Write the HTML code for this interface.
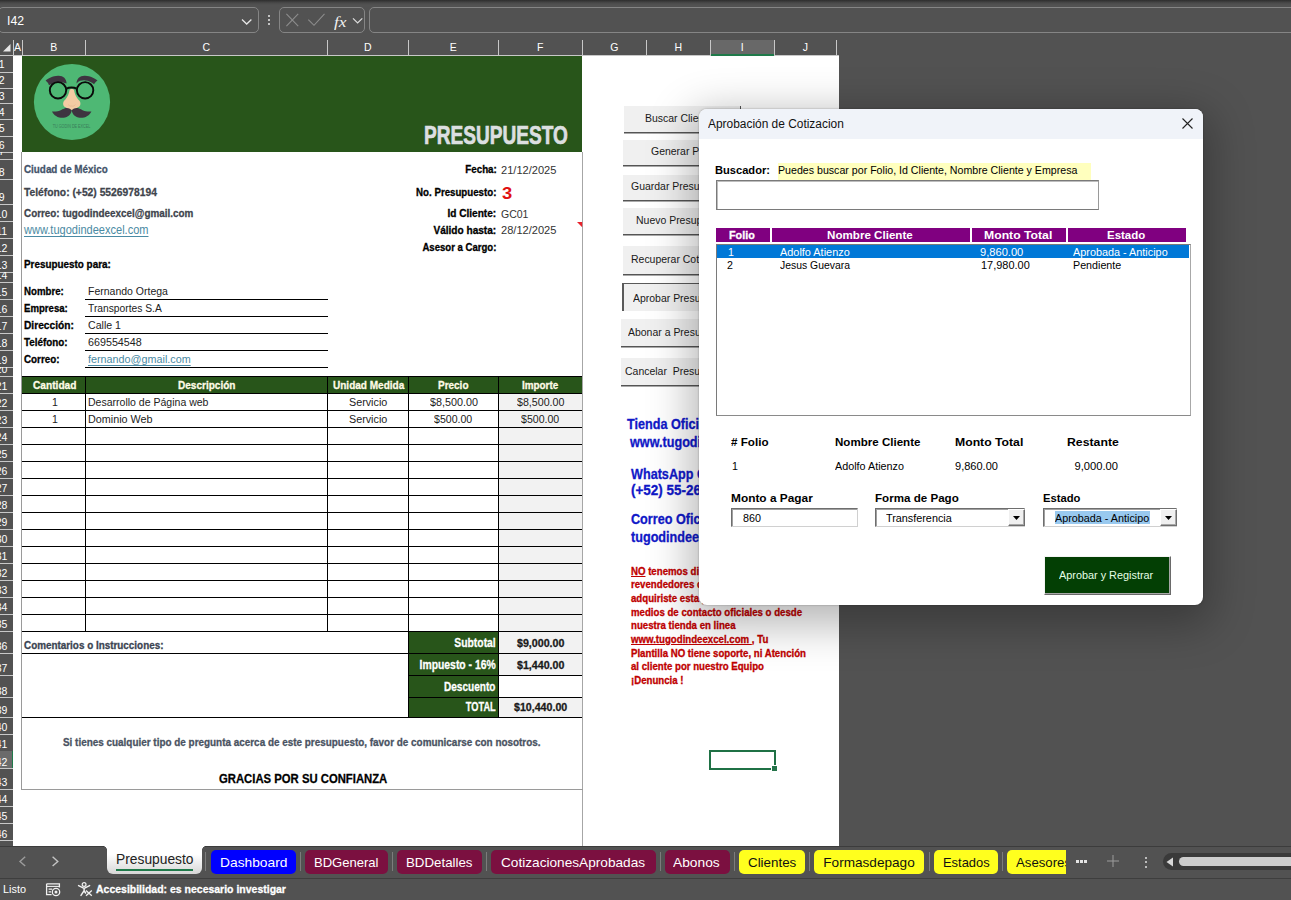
<!DOCTYPE html>
<html lang="es"><head><meta charset="utf-8"><title>Presupuesto - Aprobación de Cotizacion</title>
<style>
html,body{margin:0;padding:0}
body{width:1291px;height:900px;overflow:hidden;position:relative;background:#525252;font-family:"Liberation Sans",sans-serif;}
.t{position:absolute;white-space:pre;display:block}
.r{position:absolute}
svg{position:absolute;overflow:visible}
</style></head><body>
<div class="r" style="left:0.00px;top:0.00px;width:1291.00px;height:5.00px;background:linear-gradient(#2e2e2e,#4a4a4a 60%,#525252);"></div>
<div class="r" style="left:-2px;top:7px;width:258.5px;height:23.5px;border:1px solid #858585;border-radius:5px"></div>
<span class="t" style="top:14.00px;font-size:13.5px;line-height:13.5px;color:#fff;left:6.50px;transform-origin:0 50%;transform:scaleX(0.9058);">I42</span>
<svg style="left:241.3px;top:16.6px" width="12" height="10"><path d="M1 2.5 L5.7 7 L10.4 2.5" fill="none" stroke="#e6e6e6" stroke-width="1.3"/></svg>
<div class="r" style="left:267.80px;top:15.00px;width:2.40px;height:2.40px;background:#e8e8e8;border-radius:1px"></div>
<div class="r" style="left:267.80px;top:19.00px;width:2.40px;height:2.40px;background:#e8e8e8;border-radius:1px"></div>
<div class="r" style="left:267.80px;top:23.00px;width:2.40px;height:2.40px;background:#e8e8e8;border-radius:1px"></div>
<div class="r" style="left:279px;top:7px;width:83.5px;height:23.5px;border:1px solid #858585;border-radius:5px"></div>
<svg style="left:286px;top:13px" width="80" height="16"><path d="M0.4 0.8 L12.2 13.2 M12.2 0.8 L0.4 13.2" fill="none" stroke="#8c8c8c" stroke-width="1.1"/><path d="M22.3 6.6 L28 12.3 L38.5 0.8" fill="none" stroke="#8c8c8c" stroke-width="1.1"/><path d="M67 5.4 L71.6 10 L76.3 5.4" fill="none" stroke="#dcdcdc" stroke-width="1.2"/></svg>
<span class="t" style="top:14.00px;font-size:15.5px;line-height:15.5px;color:#f0f0f0;left:333.50px;transform-origin:0 50%;transform:scaleX(1.1198);font-family:'Liberation Serif',serif;font-style:italic;">fx</span>
<div class="r" style="left:369px;top:7px;width:930px;height:23.5px;border:1px solid #858585;border-radius:5px"></div>
<div class="r" style="left:13.00px;top:56.00px;width:825.80px;height:790.30px;background:#fff;"></div>
<div class="r" style="left:0.00px;top:55.00px;width:838.50px;height:1.00px;background:#c8c8c8;"></div>
<div class="r" style="left:710.80px;top:40.00px;width:63.00px;height:15.00px;background:#686868;"></div>
<div class="r" style="left:710.30px;top:53.60px;width:64.50px;height:2.00px;background:#1f7a4a;"></div>
<span class="t" style="top:42.00px;font-size:10.5px;line-height:10.5px;color:#fff;left:14.00px;transform-origin:50% 50%;">A</span>
<div class="r" style="left:21.50px;top:40.00px;width:1.00px;height:15.50px;background:#c8c8c8;"></div>
<span class="t" style="top:42.00px;font-size:10.5px;line-height:10.5px;color:#fff;left:50.25px;transform-origin:50% 50%;">B</span>
<div class="r" style="left:85.00px;top:40.00px;width:1.00px;height:15.50px;background:#c8c8c8;"></div>
<span class="t" style="top:42.00px;font-size:10.5px;line-height:10.5px;color:#fff;left:202.61px;transform-origin:50% 50%;">C</span>
<div class="r" style="left:326.80px;top:40.00px;width:1.00px;height:15.50px;background:#c8c8c8;"></div>
<span class="t" style="top:42.00px;font-size:10.5px;line-height:10.5px;color:#fff;left:364.01px;transform-origin:50% 50%;">D</span>
<div class="r" style="left:407.80px;top:40.00px;width:1.00px;height:15.50px;background:#c8c8c8;"></div>
<span class="t" style="top:42.00px;font-size:10.5px;line-height:10.5px;color:#fff;left:449.65px;transform-origin:50% 50%;">E</span>
<div class="r" style="left:497.50px;top:40.00px;width:1.00px;height:15.50px;background:#c8c8c8;"></div>
<span class="t" style="top:42.00px;font-size:10.5px;line-height:10.5px;color:#fff;left:536.94px;transform-origin:50% 50%;">F</span>
<div class="r" style="left:581.80px;top:40.00px;width:1.00px;height:15.50px;background:#c8c8c8;"></div>
<span class="t" style="top:42.00px;font-size:10.5px;line-height:10.5px;color:#fff;left:610.22px;transform-origin:50% 50%;">G</span>
<div class="r" style="left:645.80px;top:40.00px;width:1.00px;height:15.50px;background:#c8c8c8;"></div>
<span class="t" style="top:42.00px;font-size:10.5px;line-height:10.5px;color:#fff;left:674.51px;transform-origin:50% 50%;">H</span>
<div class="r" style="left:709.80px;top:40.00px;width:1.00px;height:15.50px;background:#c8c8c8;"></div>
<span class="t" style="top:42.00px;font-size:10.5px;line-height:10.5px;color:#fff;left:740.84px;transform-origin:50% 50%;">I</span>
<div class="r" style="left:773.80px;top:40.00px;width:1.00px;height:15.50px;background:#c8c8c8;"></div>
<span class="t" style="top:42.00px;font-size:10.5px;line-height:10.5px;color:#fff;left:802.67px;transform-origin:50% 50%;">J</span>
<div class="r" style="left:835.80px;top:40.00px;width:1.00px;height:15.50px;background:#c8c8c8;"></div>
<div class="r" style="left:12.50px;top:40.00px;width:1.00px;height:15.50px;background:#c8c8c8;"></div>
<svg style="left:2px;top:43px" width="10" height="10"><path d="M8.5 1 L8.5 8.5 L1 8.5 Z" fill="#e6e6e6"/></svg>
<div class="r" style="left:0.00px;top:56.00px;width:13.00px;height:790.30px;background:#525252;"></div>
<div class="r" style="left:0;top:56px;width:13px;height:790.3px;overflow:hidden">
<div class="r" style="left:0;top:15.50px;width:13px;height:1px;background:#c8c8c8"></div>
<div class="r" style="left:0;top:0.00px;width:13px;height:15.50px;overflow:hidden"><span class="t" style="left:1.6px;top:3.00px;font-size:10.5px;line-height:10.5px;color:#fff;transform:translateX(-50%)">1</span></div>
<div class="r" style="left:0;top:31.50px;width:13px;height:1px;background:#c8c8c8"></div>
<div class="r" style="left:0;top:16.00px;width:13px;height:15.50px;overflow:hidden"><span class="t" style="left:1.6px;top:3.00px;font-size:10.5px;line-height:10.5px;color:#fff;transform:translateX(-50%)">2</span></div>
<div class="r" style="left:0;top:47.20px;width:13px;height:1px;background:#c8c8c8"></div>
<div class="r" style="left:0;top:32.00px;width:13px;height:15.20px;overflow:hidden"><span class="t" style="left:1.6px;top:3.00px;font-size:10.5px;line-height:10.5px;color:#fff;transform:translateX(-50%)">3</span></div>
<div class="r" style="left:0;top:63.20px;width:13px;height:1px;background:#c8c8c8"></div>
<div class="r" style="left:0;top:47.70px;width:13px;height:15.50px;overflow:hidden"><span class="t" style="left:1.6px;top:3.30px;font-size:10.5px;line-height:10.5px;color:#fff;transform:translateX(-50%)">4</span></div>
<div class="r" style="left:0;top:79.50px;width:13px;height:1px;background:#c8c8c8"></div>
<div class="r" style="left:0;top:63.70px;width:13px;height:15.80px;overflow:hidden"><span class="t" style="left:1.6px;top:3.30px;font-size:10.5px;line-height:10.5px;color:#fff;transform:translateX(-50%)">5</span></div>
<div class="r" style="left:0;top:95.80px;width:13px;height:1px;background:#c8c8c8"></div>
<div class="r" style="left:0;top:80.00px;width:13px;height:15.80px;overflow:hidden"><span class="t" style="left:1.6px;top:4.00px;font-size:10.5px;line-height:10.5px;color:#fff;transform:translateX(-50%)">6</span></div>
<div class="r" style="left:0;top:102.70px;width:13px;height:1px;background:#c8c8c8"></div>
<div class="r" style="left:0;top:96.30px;width:13px;height:6.40px;overflow:hidden"><span class="t" style="left:1.6px;top:-6.30px;font-size:10.5px;line-height:10.5px;color:#fff;transform:translateX(-50%)">7</span></div>
<div class="r" style="left:0;top:123.00px;width:13px;height:1px;background:#c8c8c8"></div>
<div class="r" style="left:0;top:103.20px;width:13px;height:19.80px;overflow:hidden"><span class="t" style="left:1.6px;top:7.80px;font-size:10.5px;line-height:10.5px;color:#fff;transform:translateX(-50%)">8</span></div>
<div class="r" style="left:0;top:148.00px;width:13px;height:1px;background:#c8c8c8"></div>
<div class="r" style="left:0;top:123.50px;width:13px;height:24.50px;overflow:hidden"><span class="t" style="left:1.6px;top:12.50px;font-size:10.5px;line-height:10.5px;color:#fff;transform:translateX(-50%)">9</span></div>
<div class="r" style="left:0;top:165.00px;width:13px;height:1px;background:#c8c8c8"></div>
<div class="r" style="left:0;top:148.50px;width:13px;height:16.50px;overflow:hidden"><span class="t" style="left:1.6px;top:4.50px;font-size:10.5px;line-height:10.5px;color:#fff;transform:translateX(-50%)">10</span></div>
<div class="r" style="left:0;top:182.00px;width:13px;height:1px;background:#c8c8c8"></div>
<div class="r" style="left:0;top:165.50px;width:13px;height:16.50px;overflow:hidden"><span class="t" style="left:1.6px;top:4.50px;font-size:10.5px;line-height:10.5px;color:#fff;transform:translateX(-50%)">11</span></div>
<div class="r" style="left:0;top:198.80px;width:13px;height:1px;background:#c8c8c8"></div>
<div class="r" style="left:0;top:182.50px;width:13px;height:16.30px;overflow:hidden"><span class="t" style="left:1.6px;top:4.50px;font-size:10.5px;line-height:10.5px;color:#fff;transform:translateX(-50%)">12</span></div>
<div class="r" style="left:0;top:215.80px;width:13px;height:1px;background:#c8c8c8"></div>
<div class="r" style="left:0;top:199.30px;width:13px;height:16.50px;overflow:hidden"><span class="t" style="left:1.6px;top:4.70px;font-size:10.5px;line-height:10.5px;color:#fff;transform:translateX(-50%)">13</span></div>
<div class="r" style="left:0;top:225.70px;width:13px;height:1px;background:#c8c8c8"></div>
<div class="r" style="left:0;top:216.30px;width:13px;height:9.40px;overflow:hidden"><span class="t" style="left:1.6px;top:-2.30px;font-size:10.5px;line-height:10.5px;color:#fff;transform:translateX(-50%)">14</span></div>
<div class="r" style="left:0;top:242.80px;width:13px;height:1px;background:#c8c8c8"></div>
<div class="r" style="left:0;top:226.20px;width:13px;height:16.60px;overflow:hidden"><span class="t" style="left:1.6px;top:4.80px;font-size:10.5px;line-height:10.5px;color:#fff;transform:translateX(-50%)">15</span></div>
<div class="r" style="left:0;top:259.80px;width:13px;height:1px;background:#c8c8c8"></div>
<div class="r" style="left:0;top:243.30px;width:13px;height:16.50px;overflow:hidden"><span class="t" style="left:1.6px;top:4.70px;font-size:10.5px;line-height:10.5px;color:#fff;transform:translateX(-50%)">16</span></div>
<div class="r" style="left:0;top:276.80px;width:13px;height:1px;background:#c8c8c8"></div>
<div class="r" style="left:0;top:260.30px;width:13px;height:16.50px;overflow:hidden"><span class="t" style="left:1.6px;top:4.70px;font-size:10.5px;line-height:10.5px;color:#fff;transform:translateX(-50%)">17</span></div>
<div class="r" style="left:0;top:293.80px;width:13px;height:1px;background:#c8c8c8"></div>
<div class="r" style="left:0;top:277.30px;width:13px;height:16.50px;overflow:hidden"><span class="t" style="left:1.6px;top:4.70px;font-size:10.5px;line-height:10.5px;color:#fff;transform:translateX(-50%)">18</span></div>
<div class="r" style="left:0;top:310.80px;width:13px;height:1px;background:#c8c8c8"></div>
<div class="r" style="left:0;top:294.30px;width:13px;height:16.50px;overflow:hidden"><span class="t" style="left:1.6px;top:4.70px;font-size:10.5px;line-height:10.5px;color:#fff;transform:translateX(-50%)">19</span></div>
<div class="r" style="left:0;top:319.80px;width:13px;height:1px;background:#c8c8c8"></div>
<div class="r" style="left:0;top:311.30px;width:13px;height:8.50px;overflow:hidden"><span class="t" style="left:1.6px;top:-3.30px;font-size:10.5px;line-height:10.5px;color:#fff;transform:translateX(-50%)">20</span></div>
<div class="r" style="left:0;top:336.80px;width:13px;height:1px;background:#c8c8c8"></div>
<div class="r" style="left:0;top:320.30px;width:13px;height:16.50px;overflow:hidden"><span class="t" style="left:1.6px;top:4.70px;font-size:10.5px;line-height:10.5px;color:#fff;transform:translateX(-50%)">21</span></div>
<div class="r" style="left:0;top:353.80px;width:13px;height:1px;background:#c8c8c8"></div>
<div class="r" style="left:0;top:337.30px;width:13px;height:16.50px;overflow:hidden"><span class="t" style="left:1.6px;top:4.70px;font-size:10.5px;line-height:10.5px;color:#fff;transform:translateX(-50%)">22</span></div>
<div class="r" style="left:0;top:370.80px;width:13px;height:1px;background:#c8c8c8"></div>
<div class="r" style="left:0;top:354.30px;width:13px;height:16.50px;overflow:hidden"><span class="t" style="left:1.6px;top:4.70px;font-size:10.5px;line-height:10.5px;color:#fff;transform:translateX(-50%)">23</span></div>
<div class="r" style="left:0;top:387.80px;width:13px;height:1px;background:#c8c8c8"></div>
<div class="r" style="left:0;top:371.30px;width:13px;height:16.50px;overflow:hidden"><span class="t" style="left:1.6px;top:4.70px;font-size:10.5px;line-height:10.5px;color:#fff;transform:translateX(-50%)">24</span></div>
<div class="r" style="left:0;top:404.80px;width:13px;height:1px;background:#c8c8c8"></div>
<div class="r" style="left:0;top:388.30px;width:13px;height:16.50px;overflow:hidden"><span class="t" style="left:1.6px;top:4.70px;font-size:10.5px;line-height:10.5px;color:#fff;transform:translateX(-50%)">25</span></div>
<div class="r" style="left:0;top:421.80px;width:13px;height:1px;background:#c8c8c8"></div>
<div class="r" style="left:0;top:405.30px;width:13px;height:16.50px;overflow:hidden"><span class="t" style="left:1.6px;top:4.70px;font-size:10.5px;line-height:10.5px;color:#fff;transform:translateX(-50%)">26</span></div>
<div class="r" style="left:0;top:438.80px;width:13px;height:1px;background:#c8c8c8"></div>
<div class="r" style="left:0;top:422.30px;width:13px;height:16.50px;overflow:hidden"><span class="t" style="left:1.6px;top:4.70px;font-size:10.5px;line-height:10.5px;color:#fff;transform:translateX(-50%)">27</span></div>
<div class="r" style="left:0;top:455.80px;width:13px;height:1px;background:#c8c8c8"></div>
<div class="r" style="left:0;top:439.30px;width:13px;height:16.50px;overflow:hidden"><span class="t" style="left:1.6px;top:4.70px;font-size:10.5px;line-height:10.5px;color:#fff;transform:translateX(-50%)">28</span></div>
<div class="r" style="left:0;top:472.80px;width:13px;height:1px;background:#c8c8c8"></div>
<div class="r" style="left:0;top:456.30px;width:13px;height:16.50px;overflow:hidden"><span class="t" style="left:1.6px;top:4.70px;font-size:10.5px;line-height:10.5px;color:#fff;transform:translateX(-50%)">29</span></div>
<div class="r" style="left:0;top:489.80px;width:13px;height:1px;background:#c8c8c8"></div>
<div class="r" style="left:0;top:473.30px;width:13px;height:16.50px;overflow:hidden"><span class="t" style="left:1.6px;top:4.70px;font-size:10.5px;line-height:10.5px;color:#fff;transform:translateX(-50%)">30</span></div>
<div class="r" style="left:0;top:506.80px;width:13px;height:1px;background:#c8c8c8"></div>
<div class="r" style="left:0;top:490.30px;width:13px;height:16.50px;overflow:hidden"><span class="t" style="left:1.6px;top:4.70px;font-size:10.5px;line-height:10.5px;color:#fff;transform:translateX(-50%)">31</span></div>
<div class="r" style="left:0;top:523.80px;width:13px;height:1px;background:#c8c8c8"></div>
<div class="r" style="left:0;top:507.30px;width:13px;height:16.50px;overflow:hidden"><span class="t" style="left:1.6px;top:4.70px;font-size:10.5px;line-height:10.5px;color:#fff;transform:translateX(-50%)">32</span></div>
<div class="r" style="left:0;top:540.80px;width:13px;height:1px;background:#c8c8c8"></div>
<div class="r" style="left:0;top:524.30px;width:13px;height:16.50px;overflow:hidden"><span class="t" style="left:1.6px;top:4.70px;font-size:10.5px;line-height:10.5px;color:#fff;transform:translateX(-50%)">33</span></div>
<div class="r" style="left:0;top:557.80px;width:13px;height:1px;background:#c8c8c8"></div>
<div class="r" style="left:0;top:541.30px;width:13px;height:16.50px;overflow:hidden"><span class="t" style="left:1.6px;top:4.70px;font-size:10.5px;line-height:10.5px;color:#fff;transform:translateX(-50%)">34</span></div>
<div class="r" style="left:0;top:574.80px;width:13px;height:1px;background:#c8c8c8"></div>
<div class="r" style="left:0;top:558.30px;width:13px;height:16.50px;overflow:hidden"><span class="t" style="left:1.6px;top:4.70px;font-size:10.5px;line-height:10.5px;color:#fff;transform:translateX(-50%)">35</span></div>
<div class="r" style="left:0;top:596.80px;width:13px;height:1px;background:#c8c8c8"></div>
<div class="r" style="left:0;top:575.30px;width:13px;height:21.50px;overflow:hidden"><span class="t" style="left:1.6px;top:9.70px;font-size:10.5px;line-height:10.5px;color:#fff;transform:translateX(-50%)">36</span></div>
<div class="r" style="left:0;top:618.80px;width:13px;height:1px;background:#c8c8c8"></div>
<div class="r" style="left:0;top:597.30px;width:13px;height:21.50px;overflow:hidden"><span class="t" style="left:1.6px;top:9.70px;font-size:10.5px;line-height:10.5px;color:#fff;transform:translateX(-50%)">37</span></div>
<div class="r" style="left:0;top:641.00px;width:13px;height:1px;background:#c8c8c8"></div>
<div class="r" style="left:0;top:619.30px;width:13px;height:21.70px;overflow:hidden"><span class="t" style="left:1.6px;top:10.70px;font-size:10.5px;line-height:10.5px;color:#fff;transform:translateX(-50%)">38</span></div>
<div class="r" style="left:0;top:660.80px;width:13px;height:1px;background:#c8c8c8"></div>
<div class="r" style="left:0;top:641.50px;width:13px;height:19.30px;overflow:hidden"><span class="t" style="left:1.6px;top:7.50px;font-size:10.5px;line-height:10.5px;color:#fff;transform:translateX(-50%)">39</span></div>
<div class="r" style="left:0;top:677.80px;width:13px;height:1px;background:#c8c8c8"></div>
<div class="r" style="left:0;top:661.30px;width:13px;height:16.50px;overflow:hidden"><span class="t" style="left:1.6px;top:4.70px;font-size:10.5px;line-height:10.5px;color:#fff;transform:translateX(-50%)">40</span></div>
<div class="r" style="left:0;top:694.80px;width:13px;height:1px;background:#c8c8c8"></div>
<div class="r" style="left:0;top:678.30px;width:13px;height:16.50px;overflow:hidden"><span class="t" style="left:1.6px;top:4.70px;font-size:10.5px;line-height:10.5px;color:#fff;transform:translateX(-50%)">41</span></div>
<div class="r" style="left:0;top:695.30px;width:13px;height:17.50px;background:#6b6b6b"></div>
<div class="r" style="left:11.5px;top:695.30px;width:1.5px;height:17.50px;background:#1f7a4a"></div>
<div class="r" style="left:0;top:712.30px;width:13px;height:1px;background:#c8c8c8"></div>
<div class="r" style="left:0;top:695.30px;width:13px;height:17.00px;overflow:hidden"><span class="t" style="left:1.6px;top:5.70px;font-size:10.5px;line-height:10.5px;color:#fff;transform:translateX(-50%)">42</span></div>
<div class="r" style="left:0;top:732.50px;width:13px;height:1px;background:#c8c8c8"></div>
<div class="r" style="left:0;top:712.80px;width:13px;height:19.70px;overflow:hidden"><span class="t" style="left:1.6px;top:8.20px;font-size:10.5px;line-height:10.5px;color:#fff;transform:translateX(-50%)">43</span></div>
<div class="r" style="left:0;top:749.70px;width:13px;height:1px;background:#c8c8c8"></div>
<div class="r" style="left:0;top:733.00px;width:13px;height:16.70px;overflow:hidden"><span class="t" style="left:1.6px;top:5.00px;font-size:10.5px;line-height:10.5px;color:#fff;transform:translateX(-50%)">44</span></div>
<div class="r" style="left:0;top:766.70px;width:13px;height:1px;background:#c8c8c8"></div>
<div class="r" style="left:0;top:750.20px;width:13px;height:16.50px;overflow:hidden"><span class="t" style="left:1.6px;top:4.80px;font-size:10.5px;line-height:10.5px;color:#fff;transform:translateX(-50%)">45</span></div>
<div class="r" style="left:0;top:783.80px;width:13px;height:1px;background:#c8c8c8"></div>
<div class="r" style="left:0;top:767.20px;width:13px;height:16.60px;overflow:hidden"><span class="t" style="left:1.6px;top:5.80px;font-size:10.5px;line-height:10.5px;color:#fff;transform:translateX(-50%)">46</span></div>
<div class="r" style="left:0;top:790.00px;width:13px;height:1px;background:#c8c8c8"></div>
</div>
<div class="r" style="left:22.00px;top:56.00px;width:560.30px;height:96.00px;background:#28551a;"></div>
<svg style="left:33px;top:63px" width="78" height="78" viewBox="33 63 78 78">
<circle cx="72" cy="102" r="38.1" fill="#4eb874"/>
<path d="M45.6 80.7 C48 78.6 53 75.6 58.6 75.8 C63.4 76 66.4 78.6 66.6 83.4 C64 82.4 60.6 82 58 82.2 C54.6 82.4 51.6 83.6 49 85.2 C48.4 83 47 81.6 45.6 80.7 Z" fill="#3e3440"/>
<path d="M97.5 80.7 C95.1 78.6 90.1 75.6 84.5 75.8 C79.7 76 76.7 78.6 76.5 83.4 C79.1 80.6 82.5 80.2 85.1 80.4 C88.5 80.6 91.5 82 94.1 84.2 C94.7 82.6 96.1 81.4 97.5 80.7 Z" fill="#3e3440"/>
<path d="M69.6 90 C70.4 88.6 73.2 88.6 74 90 C74.6 93.6 75.8 96.6 78.2 99.4 C81.4 101.6 81.2 106.6 77.4 107.4 C76.4 109.6 73.6 110.4 71.8 109.8 C70 110.4 67.2 109.6 66.2 107.4 C62.4 106.6 62.2 101.6 65.4 99.4 C67.8 96.6 69 93.6 69.6 90 Z" fill="#f3cba3"/>
<path d="M68.2 104.6 C69.6 106.2 70.8 106.4 71.8 106 C72.8 106.4 74 106.2 75.4 104.6" fill="none" stroke="#e4b58c" stroke-width="0.7"/>
<circle cx="58" cy="90.3" r="8.2" fill="none" stroke="#0a0a0a" stroke-width="1.9"/>
<circle cx="85.1" cy="90.3" r="8.2" fill="none" stroke="#0a0a0a" stroke-width="1.9"/>
<path d="M66.6 88.6 C69 87.2 74 87.2 76.5 88.6" fill="none" stroke="#0a0a0a" stroke-width="1.9"/>
<path d="M71.7 110.6 C70.6 108.4 67.6 107.6 64.4 108.4 C61.2 109.4 58.6 112.2 52 111.4 C53.6 115.4 58.6 118.2 63.6 117.8 C68 117.4 71 114.6 71.7 110.6 Z" fill="#3e3440"/>
<path d="M71.7 110.6 C72.8 108.4 75.8 107.6 79 108.4 C82.2 109.4 84.8 112.2 91.4 111.4 C89.8 115.4 84.8 118.2 79.8 117.8 C75.4 117.4 72.4 114.6 71.7 110.6 Z" fill="#3e3440"/>
<text x="71.5" y="127.6" text-anchor="middle" font-family="Liberation Sans, sans-serif" font-size="5" fill="#3a7d5a" textLength="37.6" lengthAdjust="spacingAndGlyphs">TU GODIN DE EXCEL</text>
</svg>
<span class="t" style="top:123.00px;font-size:25px;line-height:25px;color:#dcdfe0;font-weight:bold;left:423.60px;transform-origin:0 50%;transform:scaleX(0.7629);-webkit-text-stroke:0.7px #dcdfe0;">PRESUPUESTO</span>
<div class="r" style="left:21.00px;top:152.00px;width:1.00px;height:637.50px;background:#9a9a9a;"></div>
<div class="r" style="left:582.00px;top:152.00px;width:1.00px;height:694.50px;background:#a6a6a6;"></div>
<div class="r" style="left:21.00px;top:789.00px;width:562.00px;height:1.00px;background:#9a9a9a;"></div>
<span class="t" style="top:163.00px;font-size:11.6px;line-height:11.6px;color:#44546a;font-weight:bold;left:24.00px;transform-origin:0 50%;transform:scaleX(0.8497);-webkit-text-stroke:0.3px #44546a;">Ciudad de México</span>
<span class="t" style="top:186.00px;font-size:11.6px;line-height:11.6px;color:#40444c;font-weight:bold;left:24.00px;transform-origin:0 50%;transform:scaleX(0.8884);-webkit-text-stroke:0.3px #40444c;">Teléfono: (+52) 5526978194</span>
<span class="t" style="top:207.00px;font-size:11.6px;line-height:11.6px;color:#40444c;font-weight:bold;left:24.00px;transform-origin:0 50%;transform:scaleX(0.8513);-webkit-text-stroke:0.3px #40444c;">Correo: tugodindeexcel@gmail.com</span>
<span class="t" style="top:224.00px;font-size:12px;line-height:12px;color:#4a8aa3;left:24.00px;transform-origin:0 50%;transform:scaleX(0.9194);text-decoration:underline;text-decoration-thickness:1px;text-underline-offset:1.5px;text-decoration-skip-ink:none;">www.tugodindeexcel.com</span>
<span class="t" style="top:259.00px;font-size:10.8px;line-height:10.8px;color:#000;font-weight:bold;left:24.00px;transform-origin:0 50%;transform:scaleX(0.9153);-webkit-text-stroke:0.3px #000;">Presupuesto para:</span>
<span class="t" style="top:286.00px;font-size:10.8px;line-height:10.8px;color:#000;font-weight:bold;left:24.00px;transform-origin:0 50%;transform:scaleX(0.8963);-webkit-text-stroke:0.3px #000;">Nombre:</span>
<span class="t" style="top:285.00px;font-size:11.7px;line-height:11.7px;color:#222;left:88.20px;transform-origin:0 50%;transform:scaleX(0.8978);">Fernando Ortega</span>
<div class="r" style="left:85.00px;top:298.80px;width:242.50px;height:1.00px;background:#000;"></div>
<span class="t" style="top:303.00px;font-size:10.8px;line-height:10.8px;color:#000;font-weight:bold;left:24.00px;transform-origin:0 50%;transform:scaleX(0.8898);-webkit-text-stroke:0.3px #000;">Empresa:</span>
<span class="t" style="top:302.00px;font-size:11.7px;line-height:11.7px;color:#222;left:88.20px;transform-origin:0 50%;transform:scaleX(0.8775);">Transportes S.A</span>
<div class="r" style="left:85.00px;top:315.80px;width:242.50px;height:1.00px;background:#000;"></div>
<span class="t" style="top:320.00px;font-size:10.8px;line-height:10.8px;color:#000;font-weight:bold;left:24.00px;transform-origin:0 50%;transform:scaleX(0.9429);-webkit-text-stroke:0.3px #000;">Dirección:</span>
<span class="t" style="top:319.00px;font-size:11.7px;line-height:11.7px;color:#222;left:88.20px;transform-origin:0 50%;transform:scaleX(0.9061);">Calle 1</span>
<div class="r" style="left:85.00px;top:332.80px;width:242.50px;height:1.00px;background:#000;"></div>
<span class="t" style="top:337.00px;font-size:10.8px;line-height:10.8px;color:#000;font-weight:bold;left:24.00px;transform-origin:0 50%;transform:scaleX(0.9101);-webkit-text-stroke:0.3px #000;">Teléfono:</span>
<span class="t" style="top:336.00px;font-size:11.7px;line-height:11.7px;color:#222;left:88.20px;transform-origin:0 50%;transform:scaleX(0.9186);">669554548</span>
<div class="r" style="left:85.00px;top:349.80px;width:242.50px;height:1.00px;background:#000;"></div>
<span class="t" style="top:354.00px;font-size:10.8px;line-height:10.8px;color:#000;font-weight:bold;left:24.00px;transform-origin:0 50%;transform:scaleX(0.9102);-webkit-text-stroke:0.3px #000;">Correo:</span>
<span class="t" style="top:353.00px;font-size:11.7px;line-height:11.7px;color:#4a8aa3;left:88.20px;transform-origin:0 50%;transform:scaleX(0.9229);text-decoration:underline;text-decoration-thickness:1px;text-underline-offset:1.5px;text-decoration-skip-ink:none;">fernando@gmail.com</span>
<div class="r" style="left:85.00px;top:366.80px;width:242.50px;height:1.00px;background:#000;"></div>
<span class="t" style="top:164.00px;font-size:10.8px;line-height:10.8px;color:#000;font-weight:bold;right:794.40px;transform-origin:100% 50%;transform:scaleX(0.9049);-webkit-text-stroke:0.3px #000;">Fecha:</span>
<span class="t" style="top:164.00px;font-size:11.7px;line-height:11.7px;color:#333;left:501.30px;transform-origin:0 50%;transform:scaleX(0.9478);">21/12/2025</span>
<span class="t" style="top:187.00px;font-size:10.8px;line-height:10.8px;color:#000;font-weight:bold;right:794.40px;transform-origin:100% 50%;transform:scaleX(0.8981);-webkit-text-stroke:0.3px #000;">No. Presupuesto:</span>
<span class="t" style="top:186.00px;font-size:15.8px;line-height:15.8px;color:#e01010;font-weight:bold;left:502.00px;transform-origin:0 50%;transform:scaleX(1.1607);">3</span>
<span class="t" style="top:208.00px;font-size:10.8px;line-height:10.8px;color:#000;font-weight:bold;right:794.40px;transform-origin:100% 50%;transform:scaleX(0.9348);-webkit-text-stroke:0.3px #000;">Id Cliente:</span>
<span class="t" style="top:208.00px;font-size:11.7px;line-height:11.7px;color:#333;left:501.30px;transform-origin:0 50%;transform:scaleX(0.8997);">GC01</span>
<span class="t" style="top:225.00px;font-size:10.8px;line-height:10.8px;color:#000;font-weight:bold;right:794.40px;transform-origin:100% 50%;transform:scaleX(0.9343);-webkit-text-stroke:0.3px #000;">Válido hasta:</span>
<span class="t" style="top:224.00px;font-size:11.7px;line-height:11.7px;color:#333;left:501.30px;transform-origin:0 50%;transform:scaleX(0.9478);">28/12/2025</span>
<span class="t" style="top:242.00px;font-size:10.8px;line-height:10.8px;color:#000;font-weight:bold;right:794.40px;transform-origin:100% 50%;transform:scaleX(0.8870);-webkit-text-stroke:0.3px #000;">Asesor a Cargo:</span>
<svg style="left:577px;top:222px" width="5.2" height="5.2"><path d="M0 0 L5.2 0 L5.2 5.2 Z" fill="#e8212b"/></svg>
<div class="r" style="left:22.00px;top:376.30px;width:560.00px;height:17.00px;background:#28551a;"></div>
<div class="r" style="left:498.50px;top:393.80px;width:83.50px;height:237.50px;background:#f2f2f2;"></div>
<div class="r" style="left:498.50px;top:631.80px;width:83.50px;height:43.50px;background:#f2f2f2;"></div>
<div class="r" style="left:498.50px;top:697.50px;width:83.50px;height:19.50px;background:#f2f2f2;"></div>
<div class="r" style="left:409.00px;top:631.80px;width:89.30px;height:85.50px;background:#28551a;"></div>
<div class="r" style="left:22.00px;top:375.80px;width:560.00px;height:1.00px;background:#000;"></div>
<div class="r" style="left:22.00px;top:392.80px;width:560.00px;height:1.00px;background:#000;"></div>
<div class="r" style="left:22.00px;top:409.80px;width:560.00px;height:1.00px;background:#000;"></div>
<div class="r" style="left:22.00px;top:426.80px;width:560.00px;height:1.00px;background:#000;"></div>
<div class="r" style="left:22.00px;top:443.80px;width:560.00px;height:1.00px;background:#000;"></div>
<div class="r" style="left:22.00px;top:460.80px;width:560.00px;height:1.00px;background:#000;"></div>
<div class="r" style="left:22.00px;top:477.80px;width:560.00px;height:1.00px;background:#000;"></div>
<div class="r" style="left:22.00px;top:494.80px;width:560.00px;height:1.00px;background:#000;"></div>
<div class="r" style="left:22.00px;top:511.80px;width:560.00px;height:1.00px;background:#000;"></div>
<div class="r" style="left:22.00px;top:528.80px;width:560.00px;height:1.00px;background:#000;"></div>
<div class="r" style="left:22.00px;top:545.80px;width:560.00px;height:1.00px;background:#000;"></div>
<div class="r" style="left:22.00px;top:562.80px;width:560.00px;height:1.00px;background:#000;"></div>
<div class="r" style="left:22.00px;top:579.80px;width:560.00px;height:1.00px;background:#000;"></div>
<div class="r" style="left:22.00px;top:596.80px;width:560.00px;height:1.00px;background:#000;"></div>
<div class="r" style="left:22.00px;top:613.80px;width:560.00px;height:1.00px;background:#000;"></div>
<div class="r" style="left:22.00px;top:630.80px;width:560.00px;height:1.00px;background:#000;"></div>
<div class="r" style="left:22.00px;top:652.80px;width:560.00px;height:1.00px;background:#000;"></div>
<div class="r" style="left:408.50px;top:674.80px;width:173.50px;height:1.00px;background:#000;"></div>
<div class="r" style="left:408.50px;top:697.00px;width:173.50px;height:1.00px;background:#000;"></div>
<div class="r" style="left:22.00px;top:716.80px;width:560.00px;height:1.00px;background:#000;"></div>
<div class="r" style="left:85.00px;top:376.00px;width:1.00px;height:255.50px;background:#000;"></div>
<div class="r" style="left:326.80px;top:376.00px;width:1.00px;height:255.50px;background:#000;"></div>
<div class="r" style="left:408.00px;top:376.00px;width:1.00px;height:341.00px;background:#000;"></div>
<div class="r" style="left:497.80px;top:376.00px;width:1.00px;height:341.00px;background:#000;"></div>
<span class="t" style="top:380.00px;font-size:11.2px;line-height:11.2px;color:#fffbe6;font-weight:bold;left:32.50px;transform-origin:0 50%;transform:scaleX(0.9079);-webkit-text-stroke:0.3px #fffbe6;">Cantidad</span>
<span class="t" style="top:380.00px;font-size:11.2px;line-height:11.2px;color:#fffbe6;font-weight:bold;left:178.20px;transform-origin:0 50%;transform:scaleX(0.8969);-webkit-text-stroke:0.3px #fffbe6;">Descripción</span>
<span class="t" style="top:380.00px;font-size:11.2px;line-height:11.2px;color:#fffbe6;font-weight:bold;left:332.50px;transform-origin:0 50%;transform:scaleX(0.8952);-webkit-text-stroke:0.3px #fffbe6;">Unidad Medida</span>
<span class="t" style="top:380.00px;font-size:11.2px;line-height:11.2px;color:#fffbe6;font-weight:bold;left:438.30px;transform-origin:0 50%;transform:scaleX(0.8908);-webkit-text-stroke:0.3px #fffbe6;">Precio</span>
<span class="t" style="top:380.00px;font-size:11.2px;line-height:11.2px;color:#fffbe6;font-weight:bold;left:522.00px;transform-origin:0 50%;transform:scaleX(0.8838);-webkit-text-stroke:0.3px #fffbe6;">Importe</span>
<span class="t" style="top:396.00px;font-size:11.7px;line-height:11.7px;color:#222;left:52.40px;transform-origin:0 50%;transform:scaleX(0.9000);">1</span>
<span class="t" style="top:413.00px;font-size:11.7px;line-height:11.7px;color:#222;left:52.40px;transform-origin:0 50%;transform:scaleX(0.9000);">1</span>
<span class="t" style="top:396.00px;font-size:11.7px;line-height:11.7px;color:#222;left:88.20px;transform-origin:0 50%;transform:scaleX(0.9001);">Desarrollo de Página web</span>
<span class="t" style="top:413.00px;font-size:11.7px;line-height:11.7px;color:#222;left:88.20px;transform-origin:0 50%;transform:scaleX(0.9241);">Dominio Web</span>
<span class="t" style="top:396.00px;font-size:11.7px;line-height:11.7px;color:#222;left:349.30px;transform-origin:0 50%;transform:scaleX(0.9204);">Servicio</span>
<span class="t" style="top:413.00px;font-size:11.7px;line-height:11.7px;color:#222;left:349.30px;transform-origin:0 50%;transform:scaleX(0.9204);">Servicio</span>
<span class="t" style="top:396.00px;font-size:11.7px;line-height:11.7px;color:#222;left:430.00px;transform-origin:0 50%;transform:scaleX(0.9222);">$8,500.00</span>
<span class="t" style="top:413.00px;font-size:11.7px;line-height:11.7px;color:#222;left:434.30px;transform-origin:0 50%;transform:scaleX(0.9056);">$500.00</span>
<span class="t" style="top:396.00px;font-size:11.7px;line-height:11.7px;color:#222;left:517.00px;transform-origin:0 50%;transform:scaleX(0.9126);">$8,500.00</span>
<span class="t" style="top:413.00px;font-size:11.7px;line-height:11.7px;color:#222;left:521.30px;transform-origin:0 50%;transform:scaleX(0.9056);">$500.00</span>
<span class="t" style="top:640.00px;font-size:10.8px;line-height:10.8px;color:#3b4452;font-weight:bold;left:24.00px;transform-origin:0 50%;transform:scaleX(0.9152);-webkit-text-stroke:0.3px #3b4452;">Comentarios o Instrucciones:</span>
<span class="t" style="top:636.00px;font-size:13.2px;line-height:13.2px;color:#fff;font-weight:bold;right:795.20px;transform-origin:100% 50%;transform:scaleX(0.7860);-webkit-text-stroke:0.3px #fff;">Subtotal</span>
<span class="t" style="top:658.00px;font-size:13.2px;line-height:13.2px;color:#fff;font-weight:bold;right:795.20px;transform-origin:100% 50%;transform:scaleX(0.7880);-webkit-text-stroke:0.3px #fff;">Impuesto - 16%</span>
<span class="t" style="top:680.00px;font-size:13.2px;line-height:13.2px;color:#fff;font-weight:bold;right:795.20px;transform-origin:100% 50%;transform:scaleX(0.7631);-webkit-text-stroke:0.3px #fff;">Descuento</span>
<span class="t" style="top:700.00px;font-size:13.2px;line-height:13.2px;color:#fff;font-weight:bold;right:795.20px;transform-origin:100% 50%;transform:scaleX(0.7014);-webkit-text-stroke:0.3px #fff;">TOTAL</span>
<span class="t" style="top:638.00px;font-size:11.2px;line-height:11.2px;color:#1a1a1a;font-weight:bold;left:517.00px;transform-origin:0 50%;transform:scaleX(0.9533);-webkit-text-stroke:0.3px #1a1a1a;">$9,000.00</span>
<span class="t" style="top:660.00px;font-size:11.2px;line-height:11.2px;color:#1a1a1a;font-weight:bold;left:517.00px;transform-origin:0 50%;transform:scaleX(0.9533);-webkit-text-stroke:0.3px #1a1a1a;">$1,440.00</span>
<span class="t" style="top:702.00px;font-size:11.2px;line-height:11.2px;color:#1a1a1a;font-weight:bold;left:514.30px;transform-origin:0 50%;transform:scaleX(0.9508);-webkit-text-stroke:0.3px #1a1a1a;">$10,440.00</span>
<span class="t" style="top:737.00px;font-size:10.8px;line-height:10.8px;color:#4a5362;font-weight:bold;left:62.80px;transform-origin:0 50%;transform:scaleX(0.9180);-webkit-text-stroke:0.3px #4a5362;">Si tienes cualquier tipo de pregunta acerca de este presupuesto, favor de comunicarse con nosotros.</span>
<span class="t" style="top:772.00px;font-size:13.3px;line-height:13.3px;color:#000;font-weight:bold;left:218.50px;transform-origin:0 50%;transform:scaleX(0.8499);-webkit-text-stroke:0.3px #000;">GRACIAS POR SU CONFIANZA</span>
<div class="r" style="left:624.00px;top:106.30px;width:117.00px;height:26.50px;background:#f0f0f0;border-bottom:1px solid #555;border-right:1px solid #555;box-sizing:border-box;box-shadow:0 1px 0 rgba(85,85,85,0.5)"></div>
<span class="t" style="top:113.00px;font-size:11.5px;line-height:11.5px;color:#1a1a1a;left:645.00px;transform-origin:0 50%;transform:scaleX(0.9100);">Buscar Cliente</span>
<div class="r" style="left:623.30px;top:140.00px;width:117.00px;height:26.00px;background:#f0f0f0;border-bottom:1px solid #555;border-right:1px solid #555;box-sizing:border-box;box-shadow:0 1px 0 rgba(85,85,85,0.5)"></div>
<span class="t" style="top:146.00px;font-size:11.5px;line-height:11.5px;color:#1a1a1a;left:651.30px;transform-origin:0 50%;transform:scaleX(0.9100);">Generar PDF</span>
<div class="r" style="left:622.60px;top:174.50px;width:117.00px;height:26.50px;background:#f0f0f0;border-bottom:1px solid #555;border-right:1px solid #555;box-sizing:border-box;box-shadow:0 1px 0 rgba(85,85,85,0.5)"></div>
<span class="t" style="top:181.00px;font-size:11.5px;line-height:11.5px;color:#1a1a1a;left:631.30px;transform-origin:0 50%;transform:scaleX(0.9100);">Guardar Presupuesto</span>
<div class="r" style="left:622.60px;top:208.00px;width:117.00px;height:27.20px;background:#f0f0f0;border-bottom:1px solid #555;border-right:1px solid #555;box-sizing:border-box;box-shadow:0 1px 0 rgba(85,85,85,0.5)"></div>
<span class="t" style="top:215.00px;font-size:11.5px;line-height:11.5px;color:#1a1a1a;left:635.50px;transform-origin:0 50%;transform:scaleX(0.9100);">Nuevo Presupuesto</span>
<div class="r" style="left:622.60px;top:246.20px;width:117.00px;height:28.40px;background:#f0f0f0;border-bottom:1px solid #555;border-right:1px solid #555;box-sizing:border-box;box-shadow:0 1px 0 rgba(85,85,85,0.5)"></div>
<span class="t" style="top:254.00px;font-size:11.5px;line-height:11.5px;color:#1a1a1a;left:630.50px;transform-origin:0 50%;transform:scaleX(0.9100);">Recuperar Cotización</span>
<div class="r" style="left:622.00px;top:283.20px;width:117.00px;height:27.40px;background:#f0f0f0;border-left:2px solid #5a5a5a;border-top:1.5px solid #5a5a5a;box-sizing:border-box"></div>
<span class="t" style="top:293.00px;font-size:11.5px;line-height:11.5px;color:#1a1a1a;left:632.50px;transform-origin:0 50%;transform:scaleX(0.9100);">Aprobar Presupuesto</span>
<div class="r" style="left:620.50px;top:319.20px;width:117.00px;height:28.00px;background:#f0f0f0;border-bottom:1px solid #555;border-right:1px solid #555;box-sizing:border-box;box-shadow:0 1px 0 rgba(85,85,85,0.5)"></div>
<span class="t" style="top:327.00px;font-size:11.5px;line-height:11.5px;color:#1a1a1a;left:627.80px;transform-origin:0 50%;transform:scaleX(0.9100);">Abonar a Presupuesto</span>
<div class="r" style="left:620.50px;top:358.20px;width:117.00px;height:28.20px;background:#f0f0f0;border-bottom:1px solid #555;border-right:1px solid #555;box-sizing:border-box;box-shadow:0 1px 0 rgba(85,85,85,0.5)"></div>
<span class="t" style="top:366.00px;font-size:11.5px;line-height:11.5px;color:#1a1a1a;left:625.40px;transform-origin:0 50%;transform:scaleX(0.9100);">Cancelar  Presupuesto</span>
<span class="t" style="top:417.00px;font-size:14.2px;line-height:14.2px;color:#1018c8;font-weight:bold;left:627.00px;transform-origin:0 50%;transform:scaleX(0.8900);-webkit-text-stroke:0.3px #1018c8;">Tienda Oficial</span>
<span class="t" style="top:435.00px;font-size:14.2px;line-height:14.2px;color:#1018c8;font-weight:bold;left:630.10px;transform-origin:0 50%;transform:scaleX(0.8900);-webkit-text-stroke:0.3px #1018c8;">www.tugodindeexcel.com</span>
<span class="t" style="top:467.00px;font-size:14.2px;line-height:14.2px;color:#1018c8;font-weight:bold;left:631.40px;transform-origin:0 50%;transform:scaleX(0.8900);-webkit-text-stroke:0.3px #1018c8;">WhatsApp Oficial</span>
<span class="t" style="top:483.00px;font-size:14.2px;line-height:14.2px;color:#1018c8;font-weight:bold;left:630.80px;transform-origin:0 50%;transform:scaleX(0.9500);-webkit-text-stroke:0.3px #1018c8;">(+52) 55-2697-8194</span>
<span class="t" style="top:512.00px;font-size:14.2px;line-height:14.2px;color:#1018c8;font-weight:bold;left:630.80px;transform-origin:0 50%;transform:scaleX(0.8900);-webkit-text-stroke:0.3px #1018c8;">Correo Oficial</span>
<span class="t" style="top:530.00px;font-size:14.2px;line-height:14.2px;color:#1018c8;font-weight:bold;left:630.80px;transform-origin:0 50%;transform:scaleX(0.8900);-webkit-text-stroke:0.3px #1018c8;">tugodindeexcel@gmail.com</span>
<span class="t" style="top:567.00px;font-size:10px;line-height:10px;color:#c00000;font-weight:bold;left:630.70px;transform-origin:0 50%;transform:scaleX(0.9650);-webkit-text-stroke:0.3px #c00000;"><u>NO</u> tenemos distribuidores ni</span>
<span class="t" style="top:580.00px;font-size:10px;line-height:10px;color:#c00000;font-weight:bold;left:630.70px;transform-origin:0 50%;transform:scaleX(0.9650);-webkit-text-stroke:0.3px #c00000;">revendedores oficiales, si</span>
<span class="t" style="top:594.00px;font-size:10px;line-height:10px;color:#c00000;font-weight:bold;left:630.70px;transform-origin:0 50%;transform:scaleX(0.9650);-webkit-text-stroke:0.3px #c00000;">adquiriste esta plantilla por otros</span>
<span class="t" style="top:608.00px;font-size:10px;line-height:10px;color:#c00000;font-weight:bold;left:630.70px;transform-origin:0 50%;transform:scaleX(0.9650);-webkit-text-stroke:0.3px #c00000;">medios de contacto oficiales o desde</span>
<span class="t" style="top:621.00px;font-size:10px;line-height:10px;color:#c00000;font-weight:bold;left:630.70px;transform-origin:0 50%;transform:scaleX(0.9650);-webkit-text-stroke:0.3px #c00000;">nuestra tienda en linea</span>
<span class="t" style="top:635.00px;font-size:10px;line-height:10px;color:#c00000;font-weight:bold;left:630.70px;transform-origin:0 50%;transform:scaleX(0.9650);-webkit-text-stroke:0.3px #c00000;"><u>www.tugodindeexcel.com </u>, Tu</span>
<span class="t" style="top:649.00px;font-size:10px;line-height:10px;color:#c00000;font-weight:bold;left:630.70px;transform-origin:0 50%;transform:scaleX(0.9650);-webkit-text-stroke:0.3px #c00000;">Plantilla NO tiene soporte, ni Atención</span>
<span class="t" style="top:662.00px;font-size:10px;line-height:10px;color:#c00000;font-weight:bold;left:630.70px;transform-origin:0 50%;transform:scaleX(0.9650);-webkit-text-stroke:0.3px #c00000;">al cliente por nuestro Equipo</span>
<span class="t" style="top:676.00px;font-size:10px;line-height:10px;color:#c00000;font-weight:bold;left:630.70px;transform-origin:0 50%;transform:scaleX(0.9650);-webkit-text-stroke:0.3px #c00000;">¡Denuncia !</span>
<div class="r" style="left:709.2px;top:750px;width:67px;height:20px;border:2px solid #1f7145;box-sizing:border-box"></div>
<div class="r" style="left:771.20px;top:765.20px;width:7.00px;height:7.00px;background:#fff;"></div>
<div class="r" style="left:772.20px;top:766.20px;width:5.00px;height:5.00px;background:#25744a;"></div>
<div class="r" style="left:698.80px;top:108.80px;width:504.20px;height:496.40px;background:#fff;border-radius:8px;box-shadow:0 12px 44px 8px rgba(0,0,0,0.29),0 0 2px rgba(0,0,0,0.35);overflow:hidden"><div class="r" style="left:0;top:0;width:100%;height:30px;background:#f0f3f9"></div></div>
<span class="t" style="top:118.00px;font-size:12px;line-height:12px;color:#111;left:708.00px;transform-origin:0 50%;transform:scaleX(0.9930);">Aprobación de Cotizacion</span>
<svg style="left:1182px;top:117.5px" width="11" height="11"><path d="M0.5 0.5 L10.5 10.5 M10.5 0.5 L0.5 10.5" fill="none" stroke="#222" stroke-width="1.1"/></svg>
<span class="t" style="top:165.00px;font-size:11.3px;line-height:11.3px;color:#000;font-weight:bold;left:715.00px;transform-origin:0 50%;transform:scaleX(0.9842);">Buscador:</span>
<div class="r" style="left:778.00px;top:163.00px;width:312.50px;height:17.00px;background:#ffffbe;"></div>
<span class="t" style="top:165.00px;font-size:11.2px;line-height:11.2px;color:#000;left:778.30px;transform-origin:0 50%;transform:scaleX(0.9496);">Puedes buscar por Folio, Id Cliente, Nombre Cliente y Empresa</span>
<div class="r" style="left:715.5px;top:180px;width:383.3px;height:30px;background:#fff;border:1px solid #7a7a7a;border-right-color:#9a9a9a;box-sizing:border-box;box-shadow:inset 1px 1px 0 #bdbdbd"></div>
<div class="r" style="left:716.00px;top:228.00px;width:54.00px;height:13.80px;background:#800080;"></div>
<span class="t" style="top:230.00px;font-size:11.3px;line-height:11.3px;color:#fff;font-weight:bold;left:729.30px;transform-origin:0 50%;transform:scaleX(0.9560);-webkit-text-stroke:0.3px #fff;">Folio</span>
<div class="r" style="left:772.00px;top:228.00px;width:198.00px;height:13.80px;background:#800080;"></div>
<span class="t" style="top:230.00px;font-size:11.3px;line-height:11.3px;color:#fff;font-weight:bold;left:826.80px;transform-origin:0 50%;transform:scaleX(1.0274);">Nombre Cliente</span>
<div class="r" style="left:972.00px;top:228.00px;width:93.50px;height:13.80px;background:#800080;"></div>
<span class="t" style="top:230.00px;font-size:11.3px;line-height:11.3px;color:#fff;font-weight:bold;left:984.30px;transform-origin:0 50%;transform:scaleX(1.0811);">Monto Total</span>
<div class="r" style="left:1067.50px;top:228.00px;width:118.30px;height:13.80px;background:#800080;"></div>
<span class="t" style="top:230.00px;font-size:11.3px;line-height:11.3px;color:#fff;font-weight:bold;left:1106.80px;transform-origin:0 50%;transform:scaleX(1.0166);">Estado</span>
<div class="r" style="left:715.5px;top:243.6px;width:475.6px;height:172px;background:#fff;border:1px solid #7a7a7a;border-right-color:#a8a8a8;border-bottom-color:#8a8a8a;box-sizing:border-box"></div>
<div class="r" style="left:716.80px;top:245.00px;width:472.60px;height:12.70px;background:#0078d7;"></div>
<span class="t" style="top:247.00px;font-size:11.2px;line-height:11.2px;color:#fff;left:727.50px;transform-origin:0 50%;transform:scaleX(0.9500);">1</span>
<span class="t" style="top:247.00px;font-size:11.2px;line-height:11.2px;color:#fff;left:779.50px;transform-origin:0 50%;transform:scaleX(0.9747);">Adolfo Atienzo</span>
<span class="t" style="top:247.00px;font-size:11.2px;line-height:11.2px;color:#fff;left:980.00px;transform-origin:0 50%;transform:scaleX(0.9932);">9,860.00</span>
<span class="t" style="top:247.00px;font-size:11.2px;line-height:11.2px;color:#fff;left:1073.30px;transform-origin:0 50%;transform:scaleX(0.9697);">Aprobada - Anticipo</span>
<span class="t" style="top:260.00px;font-size:11.2px;line-height:11.2px;color:#000;left:727.20px;transform-origin:0 50%;transform:scaleX(0.9500);">2</span>
<span class="t" style="top:260.00px;font-size:11.2px;line-height:11.2px;color:#000;left:780.00px;transform-origin:0 50%;transform:scaleX(0.9293);">Jesus Guevara</span>
<span class="t" style="top:260.00px;font-size:11.2px;line-height:11.2px;color:#000;left:980.50px;transform-origin:0 50%;transform:scaleX(0.9794);">17,980.00</span>
<span class="t" style="top:260.00px;font-size:11.2px;line-height:11.2px;color:#000;left:1073.00px;transform-origin:0 50%;transform:scaleX(0.9575);">Pendiente</span>
<span class="t" style="top:437.00px;font-size:11.3px;line-height:11.3px;color:#000;font-weight:bold;left:731.30px;transform-origin:0 50%;transform:scaleX(1.0299);"># Folio</span>
<span class="t" style="top:437.00px;font-size:11.3px;line-height:11.3px;color:#000;font-weight:bold;left:835.00px;transform-origin:0 50%;transform:scaleX(1.0238);">Nombre Cliente</span>
<span class="t" style="top:437.00px;font-size:11.3px;line-height:11.3px;color:#000;font-weight:bold;left:955.00px;transform-origin:0 50%;transform:scaleX(1.0811);">Monto Total</span>
<span class="t" style="top:437.00px;font-size:11.3px;line-height:11.3px;color:#000;font-weight:bold;left:1067.00px;transform-origin:0 50%;transform:scaleX(1.0853);">Restante</span>
<span class="t" style="top:461.00px;font-size:11.2px;line-height:11.2px;color:#000;left:731.50px;transform-origin:0 50%;transform:scaleX(0.9500);">1</span>
<span class="t" style="top:461.00px;font-size:11.2px;line-height:11.2px;color:#000;left:835.00px;transform-origin:0 50%;transform:scaleX(0.9636);">Adolfo Atienzo</span>
<span class="t" style="top:461.00px;font-size:11.2px;line-height:11.2px;color:#000;left:955.00px;transform-origin:0 50%;transform:scaleX(0.9863);">9,860.00</span>
<span class="t" style="top:461.00px;font-size:11.2px;line-height:11.2px;color:#000;left:1074.50px;transform-origin:0 50%;">9,000.00</span>
<span class="t" style="top:493.00px;font-size:11.3px;line-height:11.3px;color:#000;font-weight:bold;left:731.30px;transform-origin:0 50%;transform:scaleX(1.0507);">Monto a Pagar</span>
<span class="t" style="top:493.00px;font-size:11.3px;line-height:11.3px;color:#000;font-weight:bold;left:875.00px;transform-origin:0 50%;transform:scaleX(1.0266);">Forma de Pago</span>
<span class="t" style="top:493.00px;font-size:11.3px;line-height:11.3px;color:#000;font-weight:bold;left:1043.00px;transform-origin:0 50%;transform:scaleX(0.9953);">Estado</span>
<div class="r" style="left:731.30px;top:508.00px;width:126.40px;height:19.00px;background:#fff;border:1px solid #8a8a8a;border-top-color:#6e6e6e;border-left-color:#6e6e6e;border-right-color:#d0d0d0;border-bottom-color:#d0d0d0;box-sizing:border-box;box-shadow:inset 1px 1px 0 #a0a0a0"></div>
<span class="t" style="top:513.00px;font-size:11.2px;line-height:11.2px;color:#000;left:742.50px;transform-origin:0 50%;transform:scaleX(0.9632);">860</span>
<div class="r" style="left:875.00px;top:508.00px;width:150.20px;height:19.00px;background:#fff;border:1px solid #8a8a8a;border-top-color:#6e6e6e;border-left-color:#6e6e6e;border-right-color:#d0d0d0;border-bottom-color:#d0d0d0;box-sizing:border-box;box-shadow:inset 1px 1px 0 #a0a0a0"></div>
<span class="t" style="top:513.00px;font-size:11.2px;line-height:11.2px;color:#000;left:886.30px;transform-origin:0 50%;transform:scaleX(0.9668);">Transferencia</span>
<div class="r" style="left:1043.00px;top:508.00px;width:134.00px;height:19.00px;background:#fff;border:1px solid #8a8a8a;border-top-color:#6e6e6e;border-left-color:#6e6e6e;border-right-color:#d0d0d0;border-bottom-color:#d0d0d0;box-sizing:border-box;box-shadow:inset 1px 1px 0 #a0a0a0"></div>
<div class="r" style="left:1054.50px;top:511.30px;width:95.50px;height:12.50px;background:#99c9ef;"></div>
<span class="t" style="top:513.00px;font-size:11.2px;line-height:11.2px;color:#000;left:1055.00px;transform-origin:0 50%;transform:scaleX(0.9646);">Aprobada - Anticipo</span>
<div class="r" style="left:1008.00px;top:509.00px;width:16.5px;height:16.6px;background:#f0f0f0;border:1px solid #fff;border-right-color:#6e6e6e;border-bottom-color:#6e6e6e;box-sizing:border-box;box-shadow:inset -1px -1px 0 #a8a8a8"></div>
<svg style="left:1012.50px;top:515.60px" width="8" height="5"><path d="M0 0 L7 0 L3.5 4 Z" fill="#000"/></svg>
<div class="r" style="left:1160.00px;top:509.00px;width:16.5px;height:16.6px;background:#f0f0f0;border:1px solid #fff;border-right-color:#6e6e6e;border-bottom-color:#6e6e6e;box-sizing:border-box;box-shadow:inset -1px -1px 0 #a8a8a8"></div>
<svg style="left:1164.50px;top:515.60px" width="8" height="5"><path d="M0 0 L7 0 L3.5 4 Z" fill="#000"/></svg>
<div class="r" style="left:1043.8px;top:555.5px;width:126.8px;height:39.5px;background:#033f04;border:1.5px solid #f4f4f4;border-right-color:#6a6a6a;border-bottom-color:#6a6a6a;box-sizing:border-box;box-shadow:inset -1px -1px 0 #a8a8a8"></div>
<span class="t" style="top:570.00px;font-size:11.2px;line-height:11.2px;color:#e6ffe6;left:1058.80px;transform-origin:0 50%;transform:scaleX(0.9711);">Aprobar y Registrar</span>
<div class="r" style="left:0.00px;top:846.30px;width:1291.00px;height:53.70px;background:#525252;"></div>
<div class="r" style="left:0.00px;top:846.00px;width:1291.00px;height:0.80px;background:#3c3c3c;"></div>
<div class="r" style="left:0.00px;top:877.60px;width:1291.00px;height:0.80px;background:#3e3e3e;"></div>
<svg style="left:18px;top:855px" width="44" height="14"><path d="M7.2 1.8 L2 6.4 L7.2 11" fill="none" stroke="#9c9c9c" stroke-width="1.4"/><path d="M34.6 1.8 L39.8 6.4 L34.6 11" fill="none" stroke="#c4c4c4" stroke-width="1.4"/></svg>
<div class="r" style="left:107px;top:846.3px;width:95px;height:27.6px;background:linear-gradient(#fff 30%,#d6d6d6);border-radius:0 0 6px 6px"></div>
<span class="t" style="top:852.00px;font-size:14.5px;line-height:14.5px;color:#222;left:115.50px;transform-origin:0 50%;transform:scaleX(0.9519);">Presupuesto</span>
<div class="r" style="left:103px;top:846.3px;width:4px;height:4px;background:radial-gradient(circle at 0 100%,rgba(255,255,255,0) 3.6px,#fff 4.2px)"></div>
<div class="r" style="left:202px;top:846.3px;width:4px;height:4px;background:radial-gradient(circle at 100% 100%,rgba(255,255,255,0) 3.6px,#fff 4.2px)"></div>
<div class="r" style="left:115.50px;top:869.30px;width:77.50px;height:1.60px;background:#1f7a4a;"></div>
<div class="r" style="left:210.80px;top:850px;width:85.00px;height:24px;background:#0000ff;border-radius:5px"></div>
<span class="t" style="top:856.00px;font-size:13.6px;line-height:13.6px;color:#fff;left:220.30px;transform-origin:0 50%;transform:scaleX(1.0145);">Dashboard</span>
<div class="r" style="left:305.00px;top:850px;width:82.50px;height:24px;background:#7b1040;border-radius:5px"></div>
<span class="t" style="top:856.00px;font-size:13.6px;line-height:13.6px;color:#fff;left:314.30px;transform-origin:0 50%;transform:scaleX(0.9587);">BDGeneral</span>
<div class="r" style="left:397.00px;top:850px;width:85.00px;height:24px;background:#7b1040;border-radius:5px"></div>
<span class="t" style="top:856.00px;font-size:13.6px;line-height:13.6px;color:#fff;left:406.00px;transform-origin:0 50%;transform:scaleX(0.9775);">BDDetalles</span>
<div class="r" style="left:490.80px;top:850px;width:165.00px;height:24px;background:#7b1040;border-radius:5px"></div>
<span class="t" style="top:856.00px;font-size:13.6px;line-height:13.6px;color:#fff;left:500.80px;transform-origin:0 50%;transform:scaleX(1.0038);">CotizacionesAprobadas</span>
<div class="r" style="left:665.00px;top:850px;width:64.50px;height:24px;background:#7b1040;border-radius:5px"></div>
<span class="t" style="top:856.00px;font-size:13.6px;line-height:13.6px;color:#fff;left:673.30px;transform-origin:0 50%;transform:scaleX(1.0124);">Abonos</span>
<div class="r" style="left:738.80px;top:850px;width:66.20px;height:24px;background:#ffff1e;border-radius:5px"></div>
<span class="t" style="top:856.00px;font-size:13.6px;line-height:13.6px;color:#111;left:748.00px;transform-origin:0 50%;transform:scaleX(0.9830);">Clientes</span>
<div class="r" style="left:813.80px;top:850px;width:110.70px;height:24px;background:#ffff1e;border-radius:5px"></div>
<span class="t" style="top:856.00px;font-size:13.6px;line-height:13.6px;color:#111;left:823.30px;transform-origin:0 50%;">Formasdepago</span>
<div class="r" style="left:933.80px;top:850px;width:64.20px;height:24px;background:#ffff1e;border-radius:5px"></div>
<span class="t" style="top:856.00px;font-size:13.6px;line-height:13.6px;color:#111;left:943.30px;transform-origin:0 50%;transform:scaleX(0.9503);">Estados</span>
<div class="r" style="left:1006.80px;top:850px;width:59.00px;height:24px;overflow:hidden"><div class="r" style="left:0;top:0;width:68.20px;height:24px;background:#ffff1e;border-radius:5px"></div></div>
<div class="r" style="left:1006.80px;top:850px;width:59.00px;height:24px;overflow:hidden">
<span class="t" style="top:6.00px;font-size:13.6px;line-height:13.6px;color:#111;left:9.50px;transform-origin:0 50%;transform:scaleX(0.9701);">Asesores</span>
</div>
<div class="r" style="left:205.00px;top:852.00px;width:1.00px;height:19.00px;background:#7c7c7c;"></div>
<div class="r" style="left:300.00px;top:852.00px;width:1.00px;height:19.00px;background:#7c7c7c;"></div>
<div class="r" style="left:392.00px;top:852.00px;width:1.00px;height:19.00px;background:#7c7c7c;"></div>
<div class="r" style="left:486.00px;top:852.00px;width:1.00px;height:19.00px;background:#7c7c7c;"></div>
<div class="r" style="left:660.00px;top:852.00px;width:1.00px;height:19.00px;background:#7c7c7c;"></div>
<div class="r" style="left:734.00px;top:852.00px;width:1.00px;height:19.00px;background:#7c7c7c;"></div>
<div class="r" style="left:809.00px;top:852.00px;width:1.00px;height:19.00px;background:#7c7c7c;"></div>
<div class="r" style="left:928.80px;top:852.00px;width:1.00px;height:19.00px;background:#7c7c7c;"></div>
<div class="r" style="left:1002.00px;top:852.00px;width:1.00px;height:19.00px;background:#7c7c7c;"></div>
<div class="r" style="left:1076.00px;top:859.50px;width:3.00px;height:3.00px;background:#e4e4e4;"></div>
<div class="r" style="left:1080.00px;top:859.50px;width:3.00px;height:3.00px;background:#e4e4e4;"></div>
<div class="r" style="left:1084.00px;top:859.50px;width:3.00px;height:3.00px;background:#e4e4e4;"></div>
<svg style="left:1107px;top:855px" width="12" height="12"><path d="M6 0 L6 12 M0 6 L12 6" fill="none" stroke="#9c9c9c" stroke-width="1"/></svg>
<div class="r" style="left:1144.60px;top:856.50px;width:2.00px;height:2.00px;background:#e0e0e0;border-radius:1px"></div>
<div class="r" style="left:1144.60px;top:861.00px;width:2.00px;height:2.00px;background:#e0e0e0;border-radius:1px"></div>
<div class="r" style="left:1144.60px;top:865.50px;width:2.00px;height:2.00px;background:#e0e0e0;border-radius:1px"></div>
<div class="r" style="left:1162.5px;top:853px;width:150px;height:17px;background:#3a3a3a;border-radius:8.5px"></div>
<svg style="left:1166px;top:857px" width="8" height="10"><path d="M7 0.5 L0.5 5 L7 9.5 Z" fill="#d8d8d8"/></svg>
<div class="r" style="left:1178.8px;top:857px;width:150px;height:9.3px;background:#cdcdcd;border-radius:4.6px"></div>
<span class="t" style="top:884.00px;font-size:11.5px;line-height:11.5px;color:#fff;left:3.00px;transform-origin:0 50%;transform:scaleX(0.9468);">Listo</span>
<svg style="left:45px;top:882px" width="17" height="15"><path d="M1.6 1.8 H14.4 V5.6 M1.6 1.8 V12.6 H6.6" fill="none" stroke="#f0f0f0" stroke-width="1.3"/><path d="M1.6 4.4 H14.4" stroke="#f0f0f0" stroke-width="1.1"/><path d="M3.6 7.2 H7.2 M3.6 9.8 H6" stroke="#f0f0f0" stroke-width="1.2"/><circle cx="11" cy="10" r="3.7" fill="none" stroke="#f0f0f0" stroke-width="1.3"/><circle cx="11" cy="10" r="1.5" fill="#f0f0f0"/></svg>
<svg style="left:77px;top:881px" width="17" height="16"><circle cx="7.1" cy="3.5" r="1.9" fill="none" stroke="#f0f0f0" stroke-width="1.2"/><path d="M1.6 4.6 L7.1 7.4 L12.6 4.6 M7.1 7.4 V9.8 M7.1 9.6 L4 14.4 M7.1 9.6 L8.6 12" fill="none" stroke="#f0f0f0" stroke-width="1.5" stroke-linecap="round" stroke-linejoin="round"/><path d="M9 9.4 L14.8 14.8 M14.8 9.4 L9 14.8" stroke="#f0f0f0" stroke-width="1.3"/></svg>
<span class="t" style="top:884.00px;font-size:11.3px;line-height:11.3px;color:#fff;font-weight:bold;left:96.00px;transform-origin:0 50%;transform:scaleX(0.9280);-webkit-text-stroke:0.3px #fff;">Accesibilidad: es necesario investigar</span>
</body></html>
